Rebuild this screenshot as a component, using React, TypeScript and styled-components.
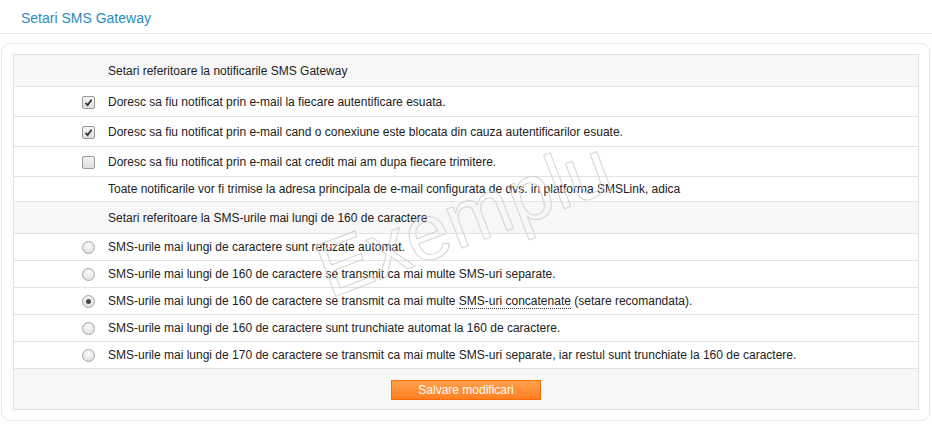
import styled, { createGlobalStyle } from "styled-components";

const GlobalStyle = createGlobalStyle`
  html, body {
    margin: 0;
    padding: 0;
    background: #ffffff;
  }
  body {
    font-family: "Liberation Sans", Arial, sans-serif;
    font-size: 12px;
    color: #222222;
  }
`;

const Page = styled.div`
  width: 932px;
  height: 424px;
  position: relative;
  overflow: hidden;
`;

const Header = styled.div`
  height: 34px;
  border-bottom: 1px solid #e8e8e8;
  box-sizing: border-box;
  padding: 10px 0 0 21px;
`;

const Title = styled.h1`
  margin: 0;
  font-size: 14px;
  font-weight: normal;
  color: #2a8cc0;
`;

const Panel = styled.div`
  margin: 9px 2px 0 1px;
  border: 1px solid #e6e6e6;
  border-radius: 9px;
  padding: 10px 10px 10px 11px;
`;

const Table = styled.table`
  width: 100%;
  border-collapse: collapse;
  border: 1px solid #e3e3e3;
`;

const Row = styled.tr<{ $shade?: boolean; $h: number }>`
  height: ${(p) => p.$h}px;
  background: ${(p) => (p.$shade ? "#f7f7f7" : "#ffffff")};
  border-bottom: 1px solid #e3e3e3;
`;

const CtrlCell = styled.td`
  width: 81px;
  padding: 0 13px 0 0;
  text-align: right;
  vertical-align: middle;
`;

const TextCell = styled.td`
  padding: 0;
  vertical-align: middle;
  white-space: nowrap;
`;

const FooterCell = styled.td`
  text-align: center;
  vertical-align: middle;
  padding: 0;
`;

const Box = styled.span`
  display: inline-flex;
  align-items: center;
  justify-content: center;
  width: 11px;
  height: 11px;
  border: 1px solid #9a9a9a;
  border-radius: 2px;
  background: linear-gradient(#f4f4f4, #dedede);
  vertical-align: middle;
`;

const Radio = styled.span<{ $on?: boolean }>`
  display: inline-flex;
  align-items: center;
  justify-content: center;
  width: 11px;
  height: 11px;
  border: 1px solid #a8a8a8;
  border-radius: 50%;
  background: radial-gradient(circle at 50% 35%, #fbfbfb, #d9d9d9);
  vertical-align: middle;

  &::after {
    content: "";
    display: ${(p) => (p.$on ? "block" : "none")};
    width: 5px;
    height: 5px;
    border-radius: 50%;
    background: #4a4a4a;
  }
`;

const Dotted = styled.span`
  border-bottom: 1px dotted #333;
`;

const SaveButton = styled.button`
  width: 150px;
  height: 20px;
  border: 1px solid #ff6a00;
  background: linear-gradient(#ffa04d, #ff7f22);
  color: #ffffff;
  font-family: "Liberation Sans", Arial, sans-serif;
  font-size: 12px;
  padding: 0;
  margin-top: 1px;
  cursor: pointer;
`;

const Watermark = styled.div`
  position: absolute;
  left: 334px;
  top: 231px;
  font-family: "Liberation Sans", Arial, sans-serif;
  font-size: 79px;
  color: transparent;
  -webkit-text-stroke: 1px #d4d4d4;
  transform: rotate(-21deg);
  transform-origin: left bottom;
  pointer-events: none;
  line-height: 1;
`;

const Check = () => (
  <svg width="9" height="9" viewBox="0 0 9 9">
    <path d="M1.5 4.8 L3.6 7 L7.6 1.8" fill="none" stroke="#333" strokeWidth="1.8" />
  </svg>
);

const checks = [
  { on: true, text: "Doresc sa fiu notificat prin e-mail la fiecare autentificare esuata." },
  { on: true, text: "Doresc sa fiu notificat prin e-mail cand o conexiune este blocata din cauza autentificarilor esuate." },
  { on: false, text: "Doresc sa fiu notificat prin e-mail cat credit mai am dupa fiecare trimitere." },
];

const radios = [
  { on: false, text: "SMS-urile mai lungi de caractere sunt refuzate automat." },
  { on: false, text: "SMS-urile mai lungi de 160 de caractere se transmit ca mai multe SMS-uri separate." },
  { on: true, text: "" },
  { on: false, text: "SMS-urile mai lungi de 160 de caractere sunt trunchiate automat la 160 de caractere." },
  {
    on: false,
    text: "SMS-urile mai lungi de 170 de caractere se transmit ca mai multe SMS-uri separate, iar restul sunt trunchiate la 160 de caractere.",
  },
];

export default function App() {
  return (
    <Page>
      <GlobalStyle />
      <Header>
        <Title>Setari SMS Gateway</Title>
      </Header>
      <Panel>
        <Table>
          <tbody>
            <Row $shade $h={32}>
              <CtrlCell />
              <TextCell>Setari referitoare la notificarile SMS Gateway</TextCell>
            </Row>
            {checks.map((c) => (
              <Row key={c.text} $h={30}>
                <CtrlCell>
                  <Box>{c.on && <Check />}</Box>
                </CtrlCell>
                <TextCell>{c.text}</TextCell>
              </Row>
            ))}
            <Row $h={25}>
              <CtrlCell />
              <TextCell>
                Toate notificarile vor fi trimise la adresa principala de e-mail configurata de dvs. in platforma SMSLink, adica
              </TextCell>
            </Row>
            <Row $shade $h={32}>
              <CtrlCell />
              <TextCell>Setari referitoare la SMS-urile mai lungi de 160 de caractere</TextCell>
            </Row>
            {radios.map((r, i) => (
              <Row key={i} $h={27}>
                <CtrlCell>
                  <Radio $on={r.on} />
                </CtrlCell>
                <TextCell>
                  {r.on ? (
                    <>
                      SMS-urile mai lungi de 160 de caractere se transmit ca mai multe{" "}
                      <Dotted>SMS-uri concatenate</Dotted> (setare recomandata).
                    </>
                  ) : (
                    r.text
                  )}
                </TextCell>
              </Row>
            ))}
            <Row $shade $h={41}>
              <FooterCell colSpan={2}>
                <SaveButton>Salvare modificari</SaveButton>
              </FooterCell>
            </Row>
          </tbody>
        </Table>
      </Panel>
      <Watermark>Exemplu</Watermark>
    </Page>
  );
}
